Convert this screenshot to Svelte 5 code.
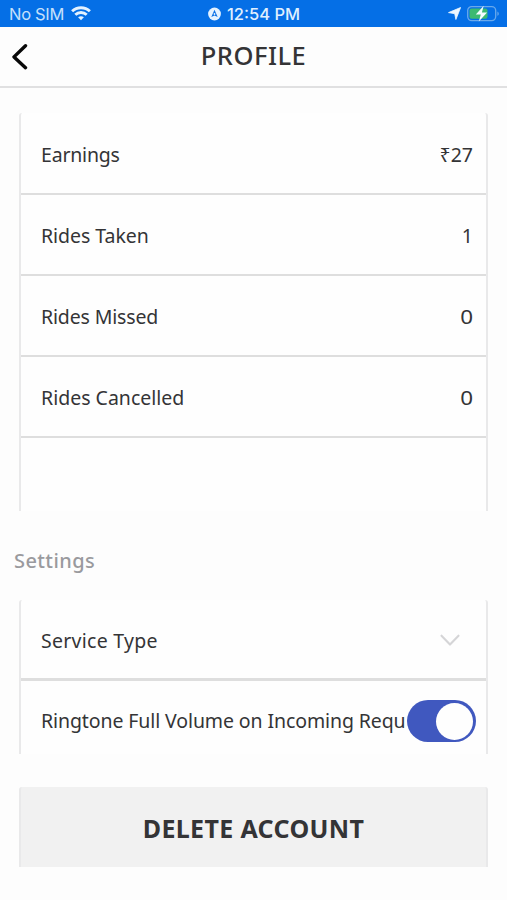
<script>
  const stats = [
    { label: "Earnings", value: "₹27", spacing: -0.2 },
    { label: "Rides Taken", value: "1", spacing: -0.05 },
    { label: "Rides Missed", value: "0", spacing: -0.15 },
    { label: "Rides Cancelled", value: "0", spacing: 0 },
  ];

  let fullVolume = $state(true);
</script>

<div class="screen">
  <div class="status">
    <div class="carrier">
      <span>No SIM</span>
      <svg width="20" height="15" viewBox="0 0 20 15" fill="none" stroke="#e4f2ff" stroke-width="2.9">
        <path d="M1.1 5.2C6 .6 14 .6 18.9 5.2" />
        <path d="M4.3 8.8c3.2-3.1 8.2-3.1 11.4 0" />
        <path d="M7.1 11.3c1.7-1.5 4.1-1.5 5.8 0L10 14.3z" fill="#e4f2ff" stroke="none" />
      </svg>
    </div>
    <div class="clock">
      <svg width="13" height="14" viewBox="0 0 13 14">
        <circle cx="6.5" cy="7" r="6.4" fill="#e4f2ff" />
        <path d="M6.5 2.7L9.7 10 6.5 8.5 3.3 10z" fill="#0a70e6" />
        <circle cx="6.5" cy="7" r=".9" fill="#e4f2ff" />
      </svg>
      <span>12:54 PM</span>
    </div>
    <div class="power">
      <svg width="13" height="13" viewBox="0 0 13 13"><path d="M12.6.5L7.9 12.5 6.7 6.7.5 5.6z" fill="#eef7ff" stroke="#eef7ff" stroke-width=".8" stroke-linejoin="round" /></svg>
      <svg width="32" height="18" viewBox="0 0 32 18">
        <rect x=".7" y="1.6" width="28" height="14" rx="4" fill="none" stroke="#69a9ec" stroke-width="1.3" />
        <rect x="2.5" y="3.4" width="18" height="10.4" rx="2.2" fill="#3cba72" />
        <path d="M30.4 6.5c1.8.8 1.8 3.5 0 4.3z" fill="#69a9ec" />
        <path d="M16.7.8L8.8 9.6h5l-2 6.9 8.3-9h-5.2z" fill="#f4fcff" />
      </svg>
    </div>
  </div>

  <header>
    <button class="back" aria-label="Back">
      <svg width="17" height="27" viewBox="0 0 17 27" fill="none" stroke="#080808" stroke-width="3.4" stroke-linecap="round" stroke-linejoin="round"><path d="M14.5 2.7L3 13.9l11.5 10.8" /></svg>
    </button>
    <h1>PROFILE</h1>
  </header>

  <main>
    <section class="card stats">
      {#each stats as s}
        <div class="row">
          <span style="letter-spacing: {s.spacing}px">{s.label}</span>
          <span class="value" class:count={s.value === "0"}>{s.value}</span>
        </div>
      {/each}
    </section>

    <h2>Settings</h2>

    <section class="card settings">
      <div class="row service">
        <span>Service Type</span>
        <svg width="20" height="13" viewBox="0 0 20 13" fill="none" stroke="#d5d5d7" stroke-width="2.1" stroke-linecap="round" stroke-linejoin="round"><path d="M1.5 1.7L10 10.6l8.5-8.9" /></svg>
      </div>
      <div class="row ringtone">
        <span>Ringtone Full Volume on Incoming Requ</span>
        <button class="toggle" class:on={fullVolume} role="switch" aria-checked={fullVolume} aria-label="Ringtone full volume" onclick={() => (fullVolume = !fullVolume)}>
          <span class="knob"></span>
        </button>
      </div>
    </section>

    <button class="delete">DELETE ACCOUNT</button>
  </main>
</div>

<style>
  :global(body) { background: #fdfdfd; }
  .screen { width: 507px; height: 900px; overflow: hidden; background: #fdfdfd; color: #343436; font-family: "Noto Sans", sans-serif; }
  button { font: inherit; color: inherit; border: 0; padding: 0; background: none; cursor: pointer; }
  svg { display: block; flex: none; }

  .status { height: 27px; display: grid; grid-template-columns: 1fr auto 1fr; align-items: center; padding: 0 8px 0 9px; box-sizing: border-box; background: #056fe6; color: #e0f0ff; font-family: Inter, sans-serif; font-size: 16.5px; }
  .carrier { display: flex; align-items: center; gap: 7px; color: #c5e0fb; letter-spacing: -0.3px; }
  .carrier span, .clock span { padding-top: 1px; }
  .clock { display: flex; align-items: center; gap: 6px; font-weight: 500; }
  .power { display: flex; align-items: center; justify-content: flex-end; gap: 6px; }

  header { height: 61px; box-sizing: border-box; border-bottom: 2px solid #e0e0e1; display: grid; grid-template-columns: 60px 1fr 60px; align-items: center; }
  .back { padding-left: 11px; justify-self: start; }
  h1 { margin: 0 0 3px; text-align: center; font-size: 25.5px; line-height: 34px; font-weight: 500; letter-spacing: 0.5px; }

  main { padding: 25px 20px 0; }
  .card { box-sizing: border-box; margin: 0 -1px; width: 469px; border: solid #e9e9ea; border-width: 0 2px; border-radius: 3px 3px 0 0; background: #fefefe; }
  .stats { height: 398px; padding-top: 1px; }
  .row { height: 81px; box-sizing: border-box; border-bottom: 2px solid #dedede; display: flex; align-items: center; justify-content: space-between; padding: 2px 13px 0 20px; font-size: 19.5px; line-height: 28px; white-space: nowrap; }
  .count { transform: scaleX(1.15); transform-origin: right; }

  h2 { margin: 36px 0 25px -6px; font-size: 20px; line-height: 28px; font-weight: 500; color: #9a9a9e; letter-spacing: 0.4px; }

  .settings { height: 154px; }
  .service { border-bottom-width: 3px; padding-right: 26px; padding-top: 3px; letter-spacing: 0.28px; }
  .ringtone { height: 73px; border-bottom: 0; padding: 7px 10px 0 20px; letter-spacing: -0.1px; }
  .toggle { flex: none; width: 69px; height: 42px; border-radius: 21px; background: #c8c8cc; display: flex; align-items: center; padding: 0 3px; box-sizing: border-box; }
  .toggle.on { background: #4058bf; justify-content: flex-end; }
  .knob { width: 37px; height: 37px; border-radius: 50%; background: #fefefe; }

  .delete { display: block; width: 469px; height: 80px; margin: 33px -1px 0; box-sizing: border-box; border: solid #e9e9ea; border-width: 0 2px; border-radius: 3px 3px 0 0; background: #f1f1f1; font-size: 25px; font-weight: 700; letter-spacing: 0.35px; padding-top: 1px; }
</style>
